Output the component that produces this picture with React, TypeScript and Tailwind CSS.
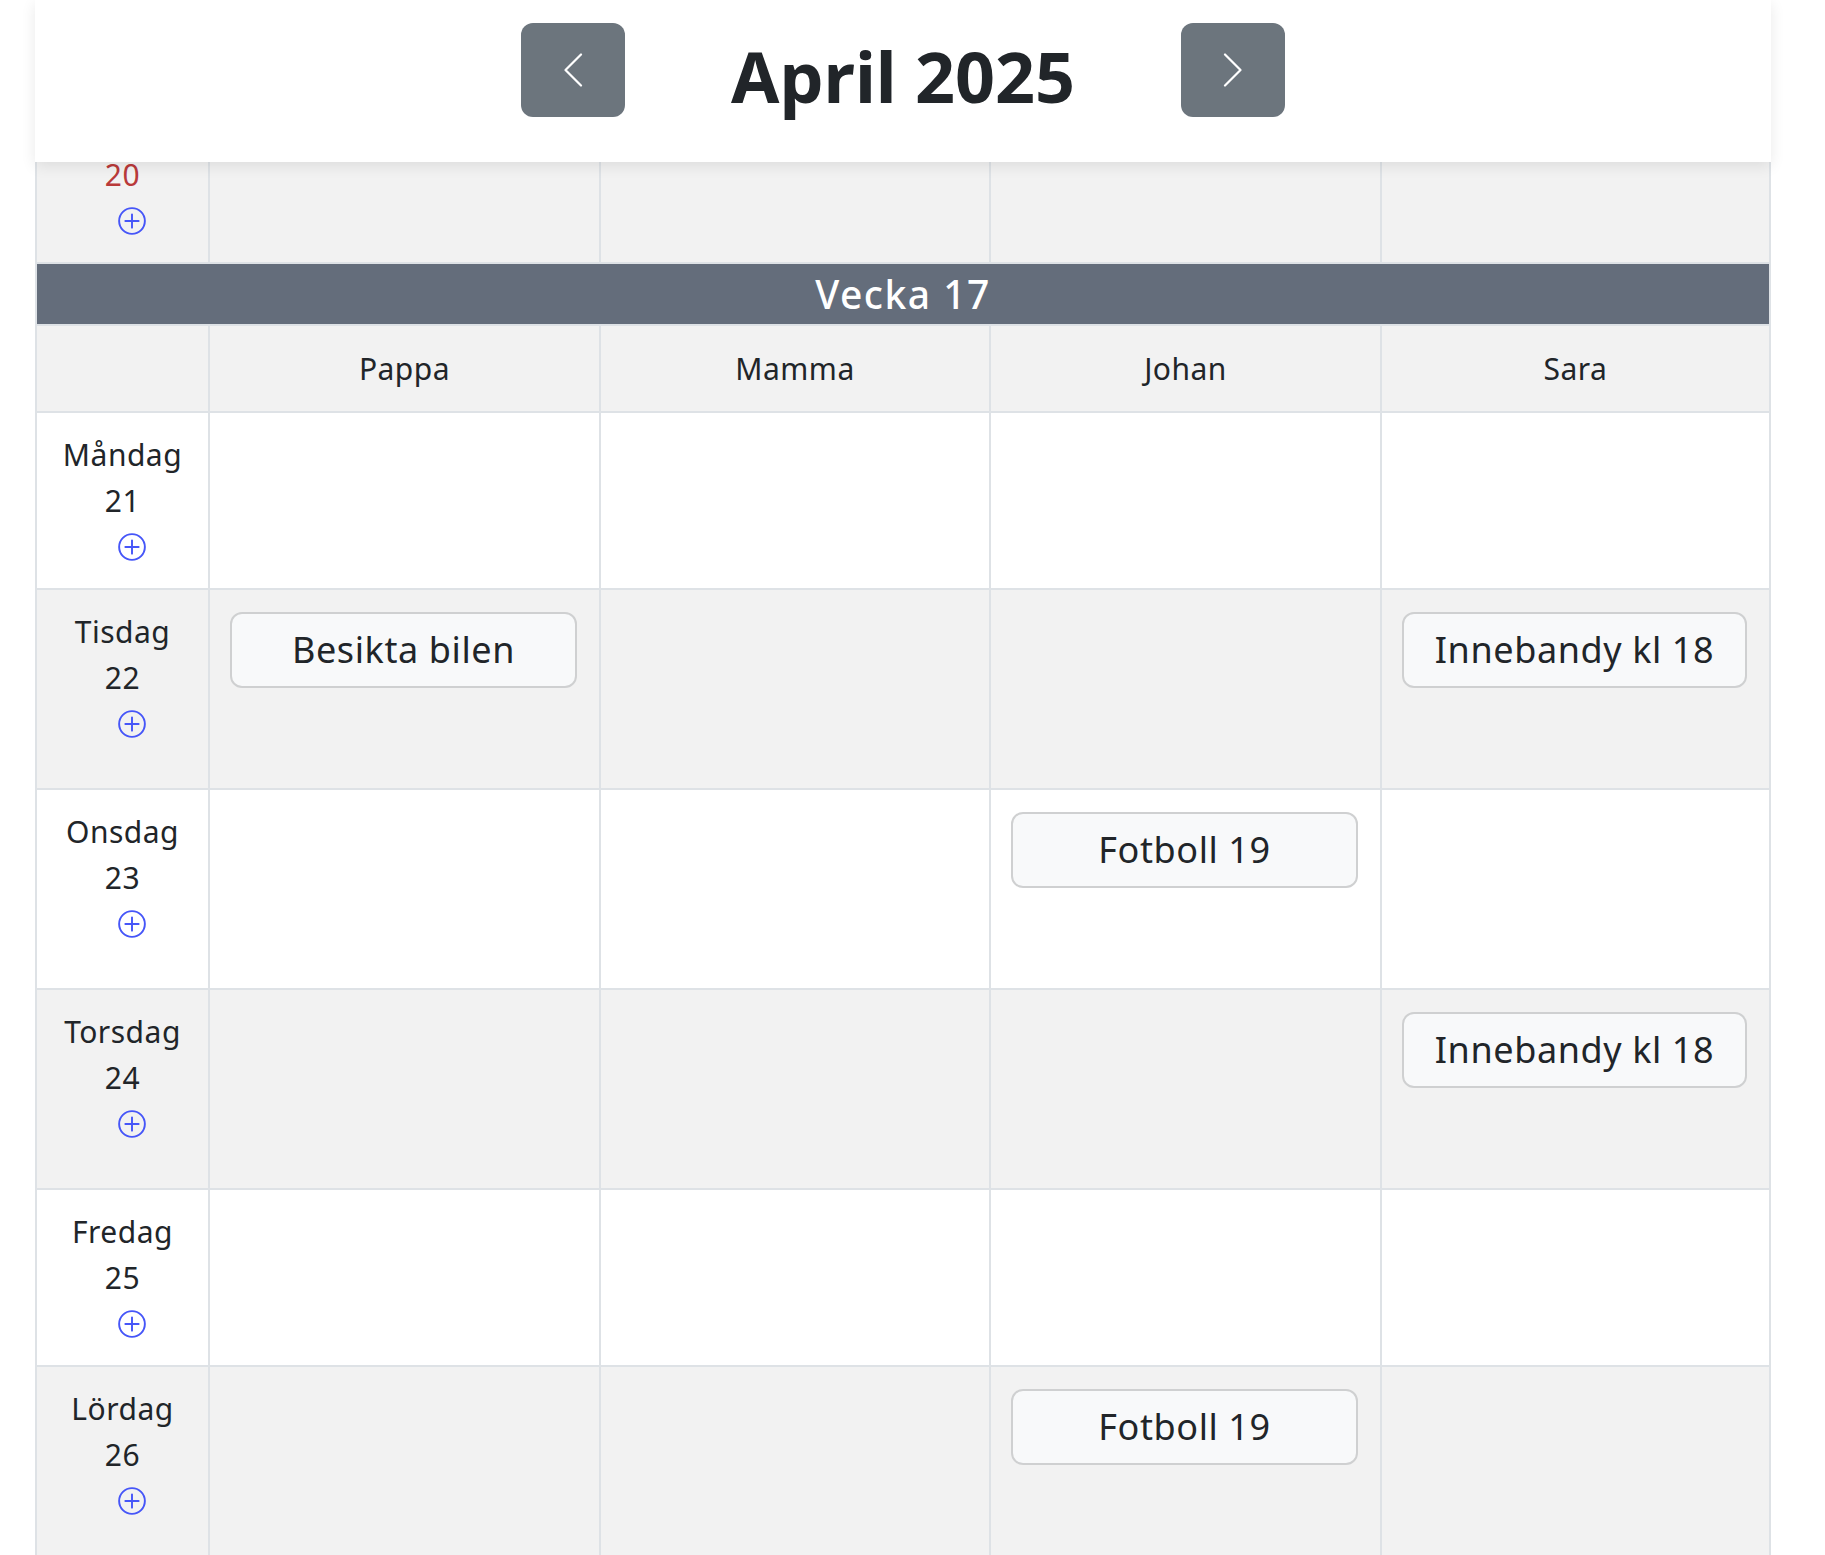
import React from 'react';

type Person = 'Pappa' | 'Mamma' | 'Johan' | 'Sara';

interface Day {
  name: string;
  date: number;
  sunday?: boolean;
  events: Partial<Record<Person, string>>;
}

const people: Person[] = ['Pappa', 'Mamma', 'Johan', 'Sara'];

const week17: Day[] = [
  { name: 'Måndag', date: 21, events: {} },
  { name: 'Tisdag', date: 22, events: { Pappa: 'Besikta bilen', Sara: 'Innebandy kl 18' } },
  { name: 'Onsdag', date: 23, events: { Johan: 'Fotboll 19' } },
  { name: 'Torsdag', date: 24, events: { Sara: 'Innebandy kl 18' } },
  { name: 'Fredag', date: 25, events: {} },
  { name: 'Lördag', date: 26, events: { Johan: 'Fotboll 19' } },
];

const PlusCircle = () => (
  <svg width="28" height="28" viewBox="0 0 16 16" fill="none" stroke="#4656f8" strokeWidth="1.1">
    <circle cx="8" cy="8" r="7.35" />
    <path d="M8 4.2v7.6M4.2 8h7.6" strokeLinecap="round" />
  </svg>
);

const Chevron = ({ dir }: { dir: 'left' | 'right' }) => (
  <svg width="20" height="34" viewBox="0 0 20 34" fill="none" stroke="white" strokeWidth="2.2" strokeLinecap="round" strokeLinejoin="round">
    {dir === 'left' ? <polyline points="18,1.5 2.5,17 18,32.5" /> : <polyline points="2,1.5 17.5,17 2,32.5" />}
  </svg>
);

const cols = 'grid grid-cols-[173px_391px_390px_391px_391px]';

const DayRow = ({ day, striped }: { day: Day; striped: boolean }) => {
  const hasEvents = Object.keys(day.events).length > 0;
  return (
    <div
      className={`${cols} border-b-2 border-[#dee2e6] ${hasEvents ? 'h-[200px]' : 'h-[177px]'} ${
        striped ? 'bg-[#f2f2f2]' : 'bg-white'
      }`}
    >
      <div className="border-l-2 border-[#dee2e6] pt-[19px] text-center text-[30px] leading-[46px] tracking-[0.5px]">
        <div className={day.sunday ? 'text-[#b93a3a]' : ''}>{day.name}</div>
        <div className={day.sunday ? 'text-[#b93a3a]' : ''}>{day.date}</div>
        <div className="flex h-[46px] items-center justify-center pl-[19px]">
          <button className="flex items-center">
            <PlusCircle />
          </button>
        </div>
      </div>
      {people.map((p, i) => (
        <div
          key={p}
          className={`border-l-2 border-[#dee2e6] pt-[22px] pl-[20px] pr-[22px] ${i === 3 ? 'border-r-2' : ''}`}
        >
          {day.events[p] && (
            <button className="flex h-[76px] w-full items-center justify-center rounded-[12px] border-2 border-[#cfd0d1] bg-[#f8f9fa] text-[36px] tracking-[0.6px] text-[#212529]">
              {day.events[p]}
            </button>
          )}
        </div>
      ))}
    </div>
  );
};

export default function App() {
  return (
    <div className="h-[1555px] overflow-hidden bg-white font-['Noto_Sans',sans-serif] text-[#212529]">
      <div className="ml-[35px] w-[1736px]">
        <header className="relative z-10 flex h-[162px] items-start justify-center gap-[106px] bg-white pt-[23px] shadow-[0_4px_14px_rgba(0,0,0,0.09)]">
          <button className="flex h-[94px] w-[104px] items-center justify-center rounded-[12px] bg-[#6c757d]">
            <Chevron dir="left" />
          </button>
          <h1 className="mt-[11px] text-[70px] font-bold leading-[84px] text-[#212529]">April 2025</h1>
          <button className="flex h-[94px] w-[104px] items-center justify-center rounded-[12px] bg-[#6c757d]">
            <Chevron dir="right" />
          </button>
        </header>

        <div className="-mt-[75px]">
          <DayRow day={{ name: 'Söndag', date: 20, sunday: true, events: {} }} striped />

          <div className="flex h-[60px] items-center justify-center border-x-2 border-[#dee2e6] bg-[#646d7b] text-[39px] font-medium tracking-[1.5px] text-white">
            Vecka 17
          </div>

          <div className={`${cols} h-[89px] border-b-2 border-t-2 border-[#dee2e6] bg-[#f2f2f2] text-[30px]`}>
            <div className="border-l-2 border-[#dee2e6]" />
            {people.map((p, i) => (
              <div
                key={p}
                className={`flex items-center justify-center border-l-2 border-[#dee2e6] tracking-[0.5px] ${i === 3 ? 'border-r-2' : ''}`}
              >
                {p}
              </div>
            ))}
          </div>

          {week17.map((d, i) => (
            <DayRow key={d.date} day={d} striped={i % 2 === 1} />
          ))}
        </div>
      </div>
    </div>
  );
}
